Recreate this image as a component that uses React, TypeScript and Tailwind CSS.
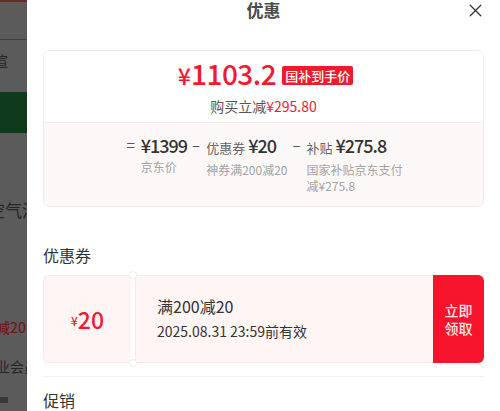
import { X } from 'lucide-react';

const font = { fontFamily: '"Noto Sans CJK SC", "Noto Sans", sans-serif' };

function Backdrop() {
  return (
    <div className="relative w-[27px] shrink-0 overflow-hidden bg-[#5b5b5b] text-[#262626]">
      <div className="h-[2px] bg-[#6b2a2a]" />
      <div className="h-[37px]" />
      <div className="h-px bg-[#4a3b3b]" />
      <div className="-ml-[22px] mt-[12px] whitespace-nowrap text-[15px] leading-[18px]">检渲</div>
      <div className="mt-[22px] h-[41px] bg-[#0f3b1c]" />
      <div className="-ml-[12px] mt-[67px] whitespace-nowrap text-[17px] leading-[20px]">空气清</div>
      <div className="-ml-[4px] mt-[98px] whitespace-nowrap text-[14px] font-medium leading-[18px] text-[#6e1b1b]">
        减20
      </div>
      <div className="-ml-[4px] mt-[21px] whitespace-nowrap text-[14px] leading-[18px]">业会员</div>
      <div className="mt-[22px] h-[6px] w-[8px] bg-[#3a3a3a]" />
    </div>
  );
}

function PriceCell({
  sign,
  tag,
  value,
  label,
}: {
  sign: string;
  tag?: string;
  value: string;
  label: React.ReactNode;
}) {
  return (
    <div className="flex items-start">
      <span className="mr-[6px] mt-[2px] text-[15px] leading-[20px] text-[#555]">{sign}</span>
      <div className="flex flex-col">
        <div className="flex items-baseline leading-[24px]">
          {tag && <span className="mr-[3px] text-[13px] text-[#666]">{tag}</span>}
          <span className="text-[18px] font-medium tracking-[-1px] text-[#333]">{value}</span>
        </div>
        <div className="mt-[2px] text-[12px] leading-[16px] text-[#a3a3a3]">{label}</div>
      </div>
    </div>
  );
}

export default function App() {
  return (
    <div className="flex h-[411px] w-[500px] overflow-hidden bg-white" style={font}>
      <Backdrop />
      <div className="flex flex-1 flex-col bg-white">
        <div className="relative flex h-[20px] items-center justify-center">
          <span className="text-[17px] font-bold leading-[20px] text-[#4b4b4b]">优惠</span>
          <X className="absolute right-[14px] top-[0px] h-[21px] w-[21px] text-[#333]" strokeWidth={1.5} />
        </div>

        <div className="px-[16px] pt-[30px]">
          <div className="overflow-hidden rounded-[7px] border border-[#f1e8e8]">
            <div className="flex flex-col items-center bg-white pb-[6px] pt-[6px]">
              <div className="flex items-center pl-[4px]">
                <span className="flex items-baseline font-medium text-[#f11a30]">
                  <span className="text-[23px] leading-[32px]">¥</span>
                  <span className="text-[28px] leading-[32px] tracking-[-0.5px]">1103.2</span>
                </span>
                <span className="ml-[6px] mt-[3px] rounded-[2px] bg-[#f01a2e] px-[3px] text-[13px] font-medium leading-[19px] text-white">
                  国补到手价
                </span>
              </div>
              <div className="mt-[5px] text-[14px] leading-[20px] text-[#555]">
                购买立减<span className="text-[#f11a30]">¥295.80</span>
              </div>
            </div>
            <div className="flex justify-center gap-[5px] border-t border-[#f6eeee] bg-[#fdf8f8] pb-[12px] pl-[2px] pt-[10px]">
              <PriceCell sign="=" value="¥1399" label="京东价" />
              <PriceCell sign="–" tag="优惠券" value="¥20" label="神券满200减20" />
              <PriceCell
                sign="–"
                tag="补贴"
                value="¥275.8"
                label={
                  <>
                    国家补贴京东支付
                    <br />
                    减¥275.8
                  </>
                }
              />
            </div>
          </div>
        </div>

        <div className="mt-[16px] h-[6px] bg-[#f6f6f9]" />

        <div className="px-[16px]">
          <div className="pt-[21px] text-[16px] leading-[22px] text-[#333]">优惠券</div>

          <div className="mt-[9px] flex h-[88px]">
            <div className="relative flex w-[88px] items-center justify-center rounded-l-[6px] border border-r-0 border-[#f8e9e9] bg-[#fff5f5] text-[#f11a30]">
              <span className="mt-[3px] text-[12px] font-medium">¥</span>
              <span className="text-[23px] font-medium leading-[28px]">20</span>
            </div>
            <div className="relative w-[4px] bg-white">
              <div className="absolute -top-[4px] left-[-2px] h-[8px] w-[8px] rounded-full border border-[#f6eaea] bg-white" />
              <div className="absolute -bottom-[4px] left-[-2px] h-[8px] w-[8px] rounded-full border border-[#f6eaea] bg-white" />
            </div>
            <div className="flex flex-1 flex-col justify-center border border-r-0 border-[#f8e9e9] bg-[#fff5f5] pb-[2px] pl-[21px]">
              <div className="text-[16px] leading-[22px] text-[#333]">满200减20</div>
              <div className="mt-[4px] text-[14px] leading-[20px] text-[#333]">2025.08.31 23:59前有效</div>
            </div>
            <div className="flex w-[51px] items-center justify-center rounded-r-[6px] bg-[#f5142b] text-center text-[14px] font-medium leading-[18px] text-[#ffe6e6]">
              <span>
                立即
                <br />
                领取
              </span>
            </div>
          </div>

          <div className="mt-[13px] h-px bg-[#efefef]" />
          <div className="pt-[12px] text-[16px] leading-[22px] text-[#333]">促销</div>
        </div>
      </div>
    </div>
  );
}
